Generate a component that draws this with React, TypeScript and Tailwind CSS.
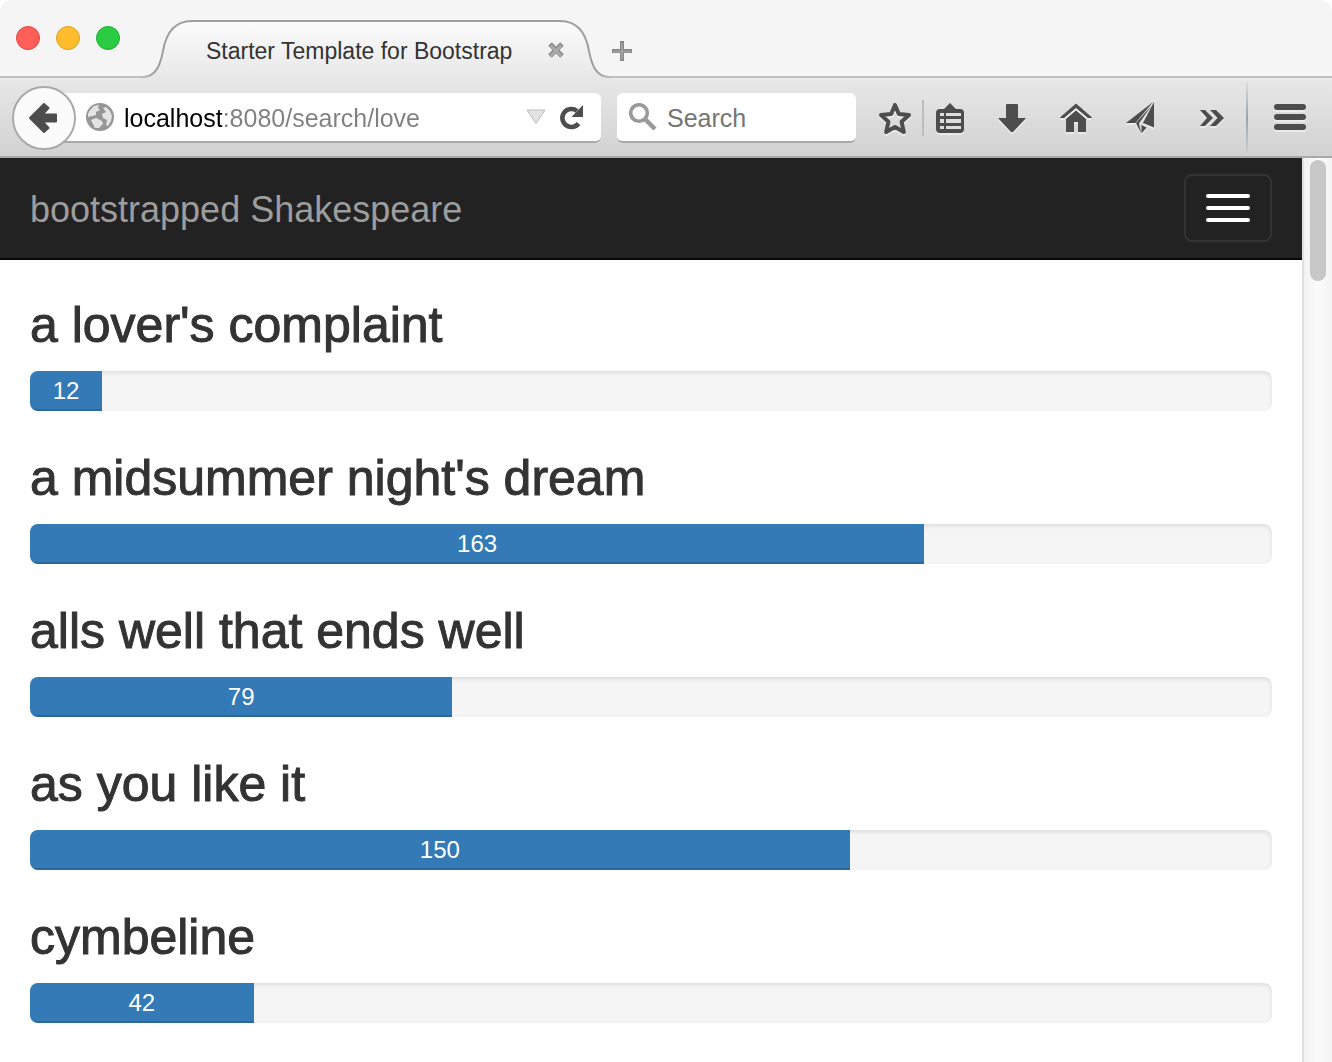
import React from "react";

type Play = { title: string; hits: number; percent: number };

const plays: Play[] = [
  { title: "a lover's complaint", hits: 12, percent: 5.8 },
  { title: "a midsummer night's dream", hits: 163, percent: 72 },
  { title: "alls well that ends well", hits: 79, percent: 34 },
  { title: "as you like it", hits: 150, percent: 66 },
  { title: "cymbeline", hits: 42, percent: 18 },
];

function ToolButton({ label, className, children }: { label: string; className: string; children: React.ReactNode }) {
  return (
    <button type="button" aria-label={label} className={`flex h-12 shrink-0 items-center justify-center text-[#4d4d4d] drop-shadow-[0_2px_0_rgba(255,255,255,0.45)] ${className}`}>
      {children}
    </button>
  );
}

function TabStrip() {
  return (
    <header className="flex h-20 items-start bg-[#f5f5f5]">
      <div className="flex h-20 shrink-0 flex-col justify-between">
        <div className="flex gap-4 pt-[26px] pr-5 pl-4">
          <button type="button" aria-label="Close window" className="size-6 rounded-full border border-[#e2443f] bg-[#ff5f58]" />
          <button type="button" aria-label="Minimize window" className="size-6 rounded-full border border-[#dfa023] bg-[#ffbd2e]" />
          <button type="button" aria-label="Zoom window" className="size-6 rounded-full border border-[#1dad2b] bg-[#29cc42]" />
        </div>
        <div className="h-1 border-t-2 border-[#bfbfbf] bg-[#ebebeb]" />
      </div>
      <div className="relative flex h-20 w-[472px] shrink-0 items-center pt-[22px] pr-11 pl-[66px]">
        <svg className="absolute inset-0" width="472" height="80" viewBox="0 0 472 80" fill="none" aria-hidden="true">
          <defs>
            <linearGradient id="tabFill" x1="0" y1="20" x2="0" y2="80" gradientUnits="userSpaceOnUse">
              <stop offset="0" stopColor="#fcfcfc" />
              <stop offset="1" stopColor="#e7e7e7" />
            </linearGradient>
            <linearGradient id="tabEdge" x1="0" y1="0" x2="472" y2="0" gradientUnits="userSpaceOnUse">
              <stop offset="0" stopColor="#bfbfbf" />
              <stop offset="0.03" stopColor="#a0a0a0" />
              <stop offset="0.97" stopColor="#a0a0a0" />
              <stop offset="1" stopColor="#bfbfbf" />
            </linearGradient>
          </defs>
          <path d="M0 80V78H4C15 77 20 67 23 51C26 33 34 21 52 21H420C438 21 446 33 449 51C452 67 457 77 468 78H472V80Z" fill="url(#tabFill)" />
          <path d="M0 77H4C15 76 20 67 23 51C26 33 34 21 52 21H420C438 21 446 33 449 51C452 67 457 76 468 77H472" stroke="url(#tabEdge)" strokeWidth="2" />
        </svg>
        <span className="relative flex-1 text-[23px] leading-7 whitespace-nowrap text-[#333]">Starter Template for Bootstrap</span>
        <button type="button" aria-label="Close tab" className="relative">
          <svg width="24" height="24" viewBox="0 0 24 24" aria-hidden="true">
            <path d="M6 5L18 17M18 5L6 17" stroke="#8c8c8c" strokeWidth="5" />
            <path d="M6.7 6.5L17.3 17M17.3 6.5L6.7 17" stroke="#ababab" strokeWidth="2.5" />
          </svg>
        </button>
      </div>
      <div className="flex h-20 min-w-0 flex-1 flex-col">
        <div className="flex h-[76px] items-center pt-[26px]">
          <button type="button" aria-label="New tab" className="-ml-1">
            <svg width="28" height="28" viewBox="0 0 28 28" aria-hidden="true">
              <path d="M14 4V24M4 14H24" stroke="#858585" strokeWidth="4" />
              <path d="M14 6V23M5 14.5H23" stroke="#a0a0a0" strokeWidth="2" />
            </svg>
          </button>
        </div>
        <div className="h-1 border-t-2 border-[#bfbfbf] bg-[#ebebeb]" />
      </div>
    </header>
  );
}

function Toolbar() {
  return (
    <div className="flex h-[78px] items-center border-b-2 border-[#a9a9a9] bg-linear-to-b from-[#e7e7e7] to-[#d2d2d2] pl-3">
      <button type="button" aria-label="Back" className="relative z-10 flex size-16 shrink-0 items-center justify-center rounded-full border-2 border-[#a9a9a9] bg-[#fbfbfb]">
        <svg width="30" height="32" viewBox="0 0 30 32" fill="#4d4d4d" stroke="#4d4d4d" strokeWidth="2" strokeLinejoin="round" aria-hidden="true">
          <path d="M1 16L15 2L19.500 6L13.500 12.500H27V19.500H13.500L19.500 26L15 30Z" />
        </svg>
      </button>
      <div className="-ml-3 flex h-[50px] min-w-0 flex-1 items-center rounded-r-md border-b-2 border-[#a9a9a9] bg-white pr-4 pl-[22px]">
        <svg className="shrink-0" width="28" height="28" viewBox="0 0 28 28" aria-hidden="true">
          <circle cx="14" cy="14" r="14" fill="#969696" />
          <path d="M4 7L8 3L13 2L12 5L14 7L10 9L10 12L6 13L2 14L2 11ZM5 17L10 15L16 18L17 21L13 25L9 25L7 21ZM17 5L20 4L24 8L26 13L25 18L22 23L20 22L21 17L17 15L16 11L20 9Z" fill="#e4e4e4" />
        </svg>
        <input
          aria-label="Address"
          defaultValue="localhost:8080/search/love"
          className="ml-[10px] min-w-0 flex-1 bg-linear-to-r from-black from-[98px] to-[#808080] to-[98px] bg-clip-text pt-0.5 text-[25px] leading-8 text-transparent outline-none"
        />
        <button type="button" aria-label="Show history" className="shrink-0">
          <svg width="22" height="16" viewBox="0 0 22 16" aria-hidden="true">
            <path d="M2 1H20L11 14.5Z" fill="#e3e3e3" stroke="#bdbdbd" />
          </svg>
        </button>
        <button type="button" aria-label="Reload" className="ml-3 shrink-0">
          <svg width="26" height="26" viewBox="0 0 26 26" aria-hidden="true">
            <path d="M19.500 19.500A9 9 0 1 1 18 7" fill="none" stroke="#4d4d4d" strokeWidth="4.600" />
            <path d="M24 1V13H12.5Z" fill="#4d4d4d" />
          </svg>
        </button>
      </div>
      <label className="ml-4 flex h-[50px] w-[239px] shrink-0 items-center rounded-md border-b-2 border-[#a9a9a9] bg-white pl-3">
        <svg className="shrink-0" width="28" height="28" viewBox="0 0 28 28" fill="none" stroke="#999" aria-hidden="true">
          <circle cx="10" cy="10" r="8.300" strokeWidth="3.600" />
          <path d="M15.5 15.5L26 26" strokeWidth="4.500" />
        </svg>
        <input aria-label="Search" placeholder="Search" className="ml-[10px] w-full min-w-0 pt-0.5 text-[25px] leading-8 outline-none placeholder:text-[#757575]" />
      </label>

      <ToolButton label="Bookmark this page" className="ml-5 w-[38px]">
        <svg width="34" height="34" viewBox="0 0 34 34" fill="none" stroke="currentColor" strokeWidth="4" aria-hidden="true">
          <path strokeLinejoin="round" d="M17 4L20.800 13L31 14L23.600 20.800L25.800 31L17 26L8.200 31L10.400 20.800L3 14L13.200 13Z" />
        </svg>
      </ToolButton>
      <div className="ml-2 h-9 w-0.5 shrink-0 bg-[#bdbdbd]" />
      <ToolButton label="Bookmarks" className="ml-2 w-9">
        <svg width="30" height="34" viewBox="0 0 30 34" aria-hidden="true">
          <path d="M15 2L21 8H25A4 4 0 0 1 29 12V28A4 4 0 0 1 25 32H5A4 4 0 0 1 1 28V12A4 4 0 0 1 5 8H9Z" fill="currentColor" />
          <path d="M11 12H26V15H11ZM11 18H26V22H11ZM11 25H26V28H11Z" fill="#dedede" />
          <path d="M5 12H9V15H5ZM5 18H9V22H5ZM5 25H9V28H5Z" fill="#dedede" />
        </svg>
      </ToolButton>
      <ToolButton label="Downloads" className="ml-7 w-8">
        <svg width="28" height="30" viewBox="0 0 28 30" aria-hidden="true">
          <path d="M9 1H19A1 1 0 0 1 20 2V15H28L15.500 28.500Q14 30 12.500 28.500L0 15H8V2A1 1 0 0 1 9 1Z" fill="currentColor" />
        </svg>
      </ToolButton>
      <ToolButton label="Home" className="ml-8 w-8">
        <svg width="32" height="30" viewBox="0 0 32 30" fill="currentColor" aria-hidden="true">
          <path d="M16 1L31.500 14.500H28L16 4.500L4 14.500H.5Z" stroke="currentColor" />
          <path d="M16 7.500L26 16V29H18V19H14V29H6V16Z" />
        </svg>
      </ToolButton>
      <ToolButton label="Share this page" className="ml-8 w-8">
        <svg width="28" height="32" viewBox="0 0 28 32" fill="currentColor" aria-hidden="true">
          <path d="M27 0L0 21H9.500Z" />
          <path d="M28 0V25.500L17 21Z" />
          <path d="M26 3L10 21L15 31L13 21.500Z" />
          <path d="M15.500 23L20.500 25.500L15.500 31.500Z" />
        </svg>
      </ToolButton>
      <ToolButton label="More tools" className="ml-[42px] w-7">
        <svg width="24" height="18" viewBox="0 0 24 18" fill="currentColor" aria-hidden="true">
          <path d="M0 1H5L13 9L5 17H0L7 9ZM10 1H16L24 9L16 17H10L17.500 9Z" />
        </svg>
      </ToolButton>
      <div className="ml-5 h-[70px] w-0.5 shrink-0 bg-linear-to-b from-[#d8dadc] via-[#9aa5af] to-[#c9cccf]" />
      <ToolButton label="Open menu" className="mr-6 ml-6 w-9">
        <svg width="32" height="28" viewBox="0 0 32 28" fill="currentColor" aria-hidden="true">
          <rect width="32" height="6" rx="3" />
          <rect y="10" width="32" height="6" rx="3" />
          <rect y="20" width="32" height="6" rx="3" />
        </svg>
      </ToolButton>
    </div>
  );
}

function PlayResult({ play }: { play: Play }) {
  return (
    <section className="mb-10">
      <h2 className="mb-[18px] text-[50px] leading-[55px] text-[#333] [-webkit-text-stroke:1px_#333]">{play.title}</h2>
      <div className="relative h-10 overflow-hidden rounded-lg bg-[#f5f5f5]">
        <div className="pointer-events-none absolute inset-0 rounded-lg shadow-[inset_0_2px_4px_rgba(0,0,0,0.1)]" />
        <div
          className="relative h-full bg-[#337ab7] text-center text-2xl leading-10 text-white shadow-[inset_0_-2px_0_rgba(0,0,0,0.15)]"
          style={{ width: `${play.percent}%` }}
        >
          {play.hits}
        </div>
      </div>
    </section>
  );
}

export default function App() {
  return (
    <div className="flex h-screen flex-col overflow-hidden bg-white font-['Liberation_Sans',Arial,sans-serif]">
      <div className="shrink-0 overflow-hidden rounded-t-xl">
        <TabStrip />
        <Toolbar />
      </div>
      <div className="flex min-h-0 flex-1">
        <main className="min-w-0 flex-1 overflow-hidden">
          <nav className="flex h-[102px] items-center justify-between border-b-2 border-[#080808] bg-[#222] px-[30px]">
            <a href="#" className="pt-1 text-4xl text-[#9d9d9d]">bootstrapped Shakespeare</a>
            <button type="button" aria-label="Toggle navigation" className="flex h-[68px] w-[88px] flex-col items-center justify-center gap-2 rounded-lg border-2 border-[#333]">
              <span className="h-1 w-11 rounded-xs bg-white" />
              <span className="h-1 w-11 rounded-xs bg-white" />
              <span className="h-1 w-11 rounded-xs bg-white" />
            </button>
          </nav>
          <div className="px-[30px] pt-[38px]">
            {plays.map((play) => (
              <PlayResult key={play.title} play={play} />
            ))}
          </div>
        </main>
        <div className="w-[30px] shrink-0 border-l-2 border-[#e0e0e0] bg-linear-to-r from-[#f1f1f1] via-[#fcfcfc] to-[#f3f3f3] pt-0.5 pl-1.5">
          <div className="h-[121px] w-4 rounded-full bg-[#c7c7c7]" />
        </div>
      </div>
    </div>
  );
}
